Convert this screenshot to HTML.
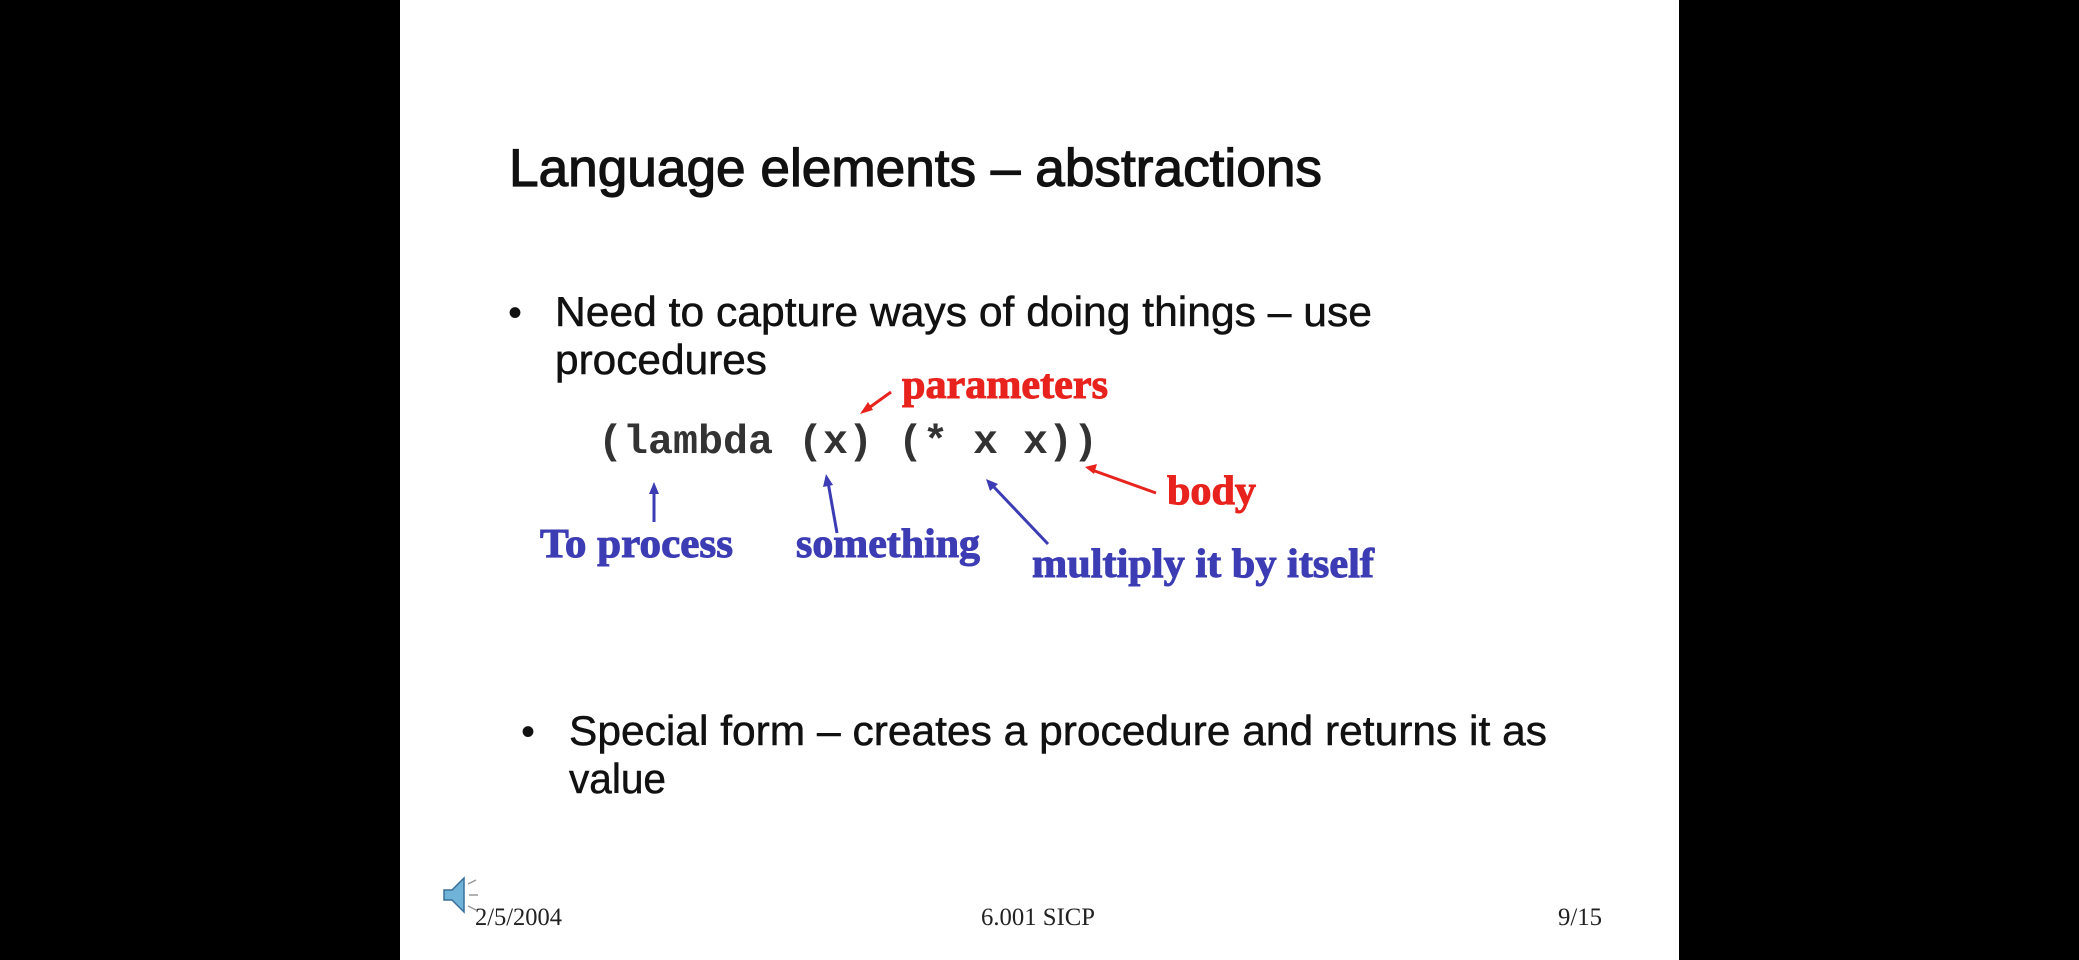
<!DOCTYPE html>
<html><head><meta charset="utf-8"><style>
html,body{margin:0;padding:0;background:#000;width:2079px;height:960px;overflow:hidden}
svg{display:block}
</style></head><body>
<svg width="2079" height="960" viewBox="0 0 2079 960" xmlns="http://www.w3.org/2000/svg">
<rect x="0" y="0" width="2079" height="960" fill="#000"/>
<rect x="400" y="0" width="1279" height="960" fill="#fff"/>
<g font-family="Liberation Sans, Arial, sans-serif" fill="#111">
<text x="509" y="186" font-size="53" stroke="#111" stroke-width="1.2" textLength="813" lengthAdjust="spacingAndGlyphs">Language elements – abstractions</text>
<text x="508" y="326" font-size="40">•</text>
<text x="555" y="326" font-size="42" stroke="#111" stroke-width="0.5" textLength="817" lengthAdjust="spacingAndGlyphs">Need to capture ways of doing things – use</text>
<text x="555" y="374" font-size="42" stroke="#111" stroke-width="0.5" textLength="212" lengthAdjust="spacingAndGlyphs">procedures</text>
<text x="521" y="745" font-size="40">•</text>
<text x="569" y="745" font-size="42" stroke="#111" stroke-width="0.5" textLength="978" lengthAdjust="spacingAndGlyphs">Special form – creates a procedure and returns it as</text>
<text x="569" y="793" font-size="42" stroke="#111" stroke-width="0.5" textLength="97" lengthAdjust="spacingAndGlyphs">value</text>
</g>
<text x="598" y="453" font-family="Liberation Mono, Courier New, monospace" font-weight="bold" font-size="41" fill="#333" textLength="500" lengthAdjust="spacingAndGlyphs" xml:space="preserve">(lambda (x) (* x x))</text>
<g font-family="Liberation Serif, Times New Roman, serif" font-weight="700" font-size="41" stroke-width="1">
<text x="902" y="398" fill="#e8231d" stroke="#e8231d" textLength="206" lengthAdjust="spacingAndGlyphs">parameters</text>
<text x="1167" y="504" fill="#e8231d" stroke="#e8231d" textLength="89" lengthAdjust="spacingAndGlyphs">body</text>
<text x="540" y="557" fill="#3c3cb4" stroke="#3c3cb4" textLength="193" lengthAdjust="spacingAndGlyphs">To process</text>
<text x="796" y="557" fill="#3c3cb4" stroke="#3c3cb4" textLength="184" lengthAdjust="spacingAndGlyphs">something</text>
<text x="1032" y="577" fill="#3c3cb4" stroke="#3c3cb4" textLength="342" lengthAdjust="spacingAndGlyphs">multiply it by itself</text>
</g>
<g stroke-width="3" fill="none">
<line x1="891" y1="392" x2="866" y2="410" stroke="#e8231d"/>
<polygon points="860,414 868,402 873,410" fill="#e8231d" stroke="none"/>
<line x1="1156" y1="493" x2="1092" y2="470" stroke="#e8231d"/>
<polygon points="1085,467 1097,464 1094,474" fill="#e8231d" stroke="none"/>
<line x1="654" y1="522" x2="654" y2="490" stroke="#3c3cb4"/>
<polygon points="654,482 649,494 659,494" fill="#3c3cb4" stroke="none"/>
<line x1="837" y1="533" x2="828" y2="482" stroke="#3c3cb4"/>
<polygon points="826,474 823,487 833,485" fill="#3c3cb4" stroke="none"/>
<line x1="1048" y1="544" x2="992" y2="485" stroke="#3c3cb4"/>
<polygon points="986,479 990,491 998,484" fill="#3c3cb4" stroke="none"/>
</g>
<g>
<polygon points="444,890 452,890 464,878 464,912 452,900 444,900" fill="#6fb4d8" stroke="#3a6f9a" stroke-width="1.5"/>
<g stroke="#999" stroke-width="1.5"><line x1="468" y1="884" x2="476" y2="880"/><line x1="469" y1="895" x2="478" y2="895"/><line x1="468" y1="906" x2="476" y2="910"/></g>
</g>
<g font-family="Liberation Serif, Times New Roman, serif" font-size="25" fill="#222">
<text x="475" y="925" textLength="87" lengthAdjust="spacingAndGlyphs">2/5/2004</text>
<text x="981" y="925" textLength="114" lengthAdjust="spacingAndGlyphs">6.001 SICP</text>
<text x="1558" y="925" textLength="44" lengthAdjust="spacingAndGlyphs">9/15</text>
</g>
</svg>
</body></html>
